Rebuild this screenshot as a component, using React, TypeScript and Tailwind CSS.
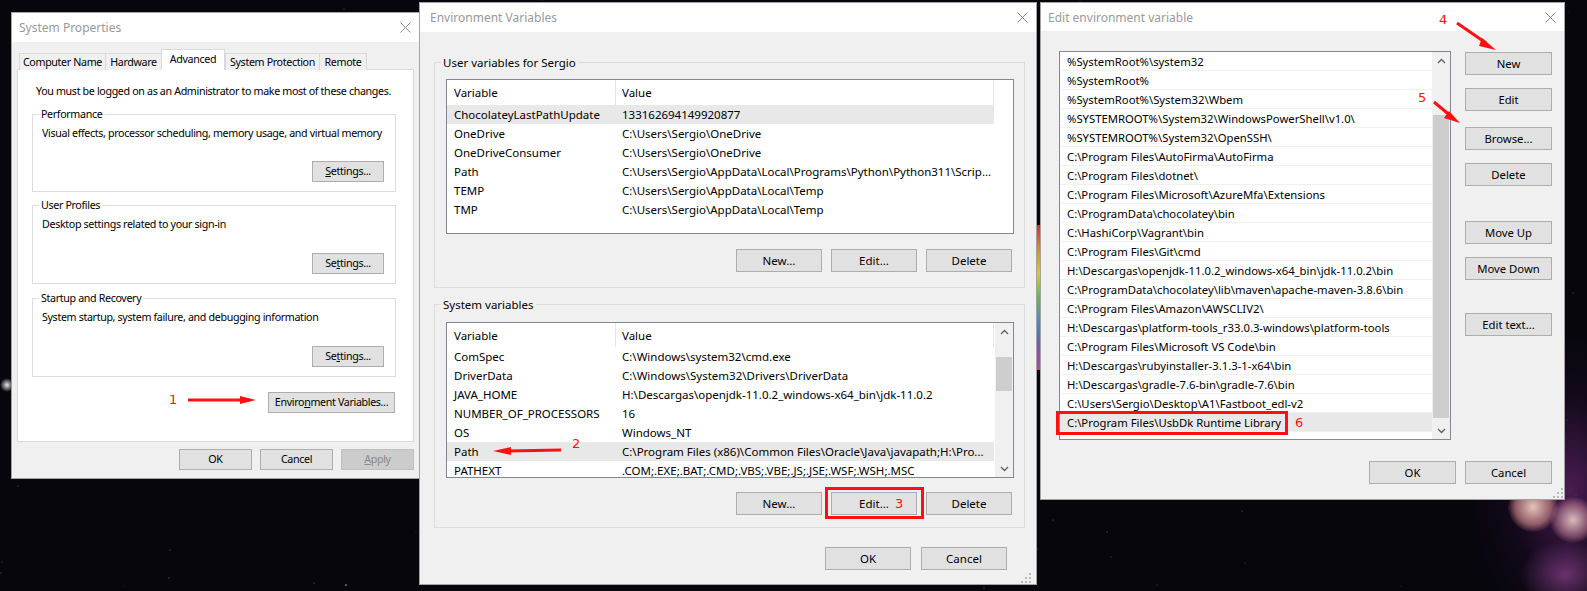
import React from 'react';

type Kids = { children?: React.ReactNode };

// deterministic star field for the desktop wallpaper
const STARS = (() => {
    let s = 91;
    const rnd = () => {
        s = (s * 16807) % 2147483647;
        return s / 2147483647;
    };
    return Array.from({ length: 220 }, () => ({
        x: Math.round(rnd() * 1587),
        y: Math.round(rnd() * 591),
        o: 0.12 + rnd() * 0.4,
        r: rnd() > 0.9 ? 1 : 0.6,
    }));
})();

function CloseX() {
    return (
        <svg width="11" height="11" viewBox="0 0 11 11" className="shrink-0">
            <path d="M0.5 0.5L10.5 10.5M10.5 0.5L0.5 10.5" stroke="#8a8a8a" strokeWidth="1" />
        </svg>
    );
}

function TitleBar({ title, h, pl, pr }: { title: string; h: string; pl: string; pr: string }) {
    return (
        <div className={`flex shrink-0 items-center justify-between bg-white ${h} ${pl} ${pr}`}>
            <span className="text-[12px] tracking-normal text-[#999999]">{title}</span>
            <CloseX />
        </div>
    );
}

function Btn({ w, h = 'h-[23px]', disabled, children }: Kids & { w: string; h?: string; disabled?: boolean }) {
    return (
        <div
            className={`flex shrink-0 items-center justify-center whitespace-nowrap border ${w} ${h} ${
                disabled ? 'border-[#bfbfbf] bg-[#cccccc] text-[#8a8a8a]' : 'border-[#adadad] bg-[#e1e1e1]'
            }`}
        >
            <span>{children}</span>
        </div>
    );
}

function Group({ label, bg, className, children }: Kids & { label: string; bg: string; className: string }) {
    return (
        <div className={`flex flex-col border border-[#dcdcdc] ${className}`}>
            <div className={`-mt-[8px] ml-[6px] w-fit px-[2px] leading-[15px] ${bg}`}>{label}</div>
            {children}
        </div>
    );
}

function Chevron({ up }: { up?: boolean }) {
    return (
        <svg width="9" height="6" viewBox="0 0 9 6">
            <path d={up ? 'M1 5L4.5 1.5L8 5' : 'M1 1L4.5 4.5L8 1'} fill="none" stroke="#606060" strokeWidth="1.3" />
        </svg>
    );
}

function Grip() {
    const dots = [
        [8, 0],
        [4, 4],
        [8, 4],
        [0, 8],
        [4, 8],
        [8, 8],
    ];
    return (
        <svg width="10" height="10" viewBox="0 0 10 10">
            {dots.map(([x, y]) => (
                <rect key={`${x}-${y}`} x={x} y={y} width="2" height="2" fill="#b8b8b8" />
            ))}
        </svg>
    );
}

/* ---------------- System Properties ---------------- */

const TABS = [
    { name: 'Computer Name', w: 'w-[87px]' },
    { name: 'Hardware', w: 'w-[57px]' },
    { name: 'Advanced', w: 'w-[64px]', active: true },
    { name: 'System Protection', w: 'w-[95px]' },
    { name: 'Remote', w: 'w-[48px]' },
];

function SystemProperties() {
    return (
        <div className="absolute left-[11px] top-[12px] flex h-[467px] w-[409px] flex-col whitespace-nowrap border border-[#a3a3a3] bg-[#f0f0f0] text-[10.7px] tracking-[-0.35px]">
            <TitleBar title="System Properties" h="h-[29px]" pl="pl-[7px]" pr="pr-[8px]" />
            <div className="relative z-10 ml-[7px] mt-[7px] flex h-[21px] items-end">
                {TABS.map((t) =>
                    t.active ? (
                        <div
                            key={t.name}
                            className={`flex h-[21px] items-start justify-center border border-b-0 border-[#d9d9d9] bg-white pt-[2px] ${t.w}`}
                        >
                            {t.name}
                        </div>
                    ) : (
                        <div
                            key={t.name}
                            className={`-mr-[1px] flex h-[17px] items-center justify-center border border-b-0 border-[#d9d9d9] bg-[#f0f0f0] ${t.w}`}
                        >
                            {t.name}
                        </div>
                    ),
                )}
            </div>
            <div className="-mt-[1px] ml-[5px] flex h-[373px] w-[397px] flex-col border border-[#d9d9d9] bg-white">
                <p className="ml-[18px] mt-[14px] leading-[15px]">
                    You must be logged on as an Administrator to make most of these changes.
                </p>
                <Group label="Performance" bg="bg-white" className="ml-[14px] mt-[15px] h-[78px] w-[364px]">
                    <p className="ml-[9px] mt-[4px] leading-[15px]">
                        Visual effects, processor scheduling, memory usage, and virtual memory
                    </p>
                    <div className="mb-[9px] mr-[11px] mt-auto self-end">
                        <Btn w="w-[72px]" h="h-[21px]">
                            <u>S</u>ettings...
                        </Btn>
                    </div>
                </Group>
                <Group label="User Profiles" bg="bg-white" className="ml-[14px] mt-[13px] h-[79px] w-[364px]">
                    <p className="ml-[9px] mt-[4px] leading-[15px]">Desktop settings related to your sign-in</p>
                    <div className="mb-[9px] mr-[11px] mt-auto self-end">
                        <Btn w="w-[72px]" h="h-[21px]">
                            Se<u>t</u>tings...
                        </Btn>
                    </div>
                </Group>
                <Group label="Startup and Recovery" bg="bg-white" className="ml-[14px] mt-[14px] h-[79px] w-[364px]">
                    <p className="ml-[9px] mt-[4px] leading-[15px]">
                        System startup, system failure, and debugging information
                    </p>
                    <div className="mb-[9px] mr-[11px] mt-auto self-end">
                        <Btn w="w-[72px]" h="h-[21px]">
                            Se<u>t</u>tings...
                        </Btn>
                    </div>
                </Group>
                <div className="mr-[18px] mt-[15px] self-end">
                    <Btn w="w-[127px]" h="h-[21px]">
                        Enviro<u>n</u>ment Variables...
                    </Btn>
                </div>
            </div>
            <div className="mr-[5px] mt-[7px] flex justify-end gap-[8px]">
                <Btn w="w-[73px]" h="h-[21px]">OK</Btn>
                <Btn w="w-[73px]" h="h-[21px]">Cancel</Btn>
                <Btn w="w-[73px]" h="h-[21px]" disabled>
                    <u>A</u>pply
                </Btn>
            </div>
        </div>
    );
}

/* ---------------- Environment Variables ---------------- */

const USER_VARS = [
    ['ChocolateyLastPathUpdate', '133162694149920877'],
    ['OneDrive', 'C:\\Users\\Sergio\\OneDrive'],
    ['OneDriveConsumer', 'C:\\Users\\Sergio\\OneDrive'],
    ['Path', 'C:\\Users\\Sergio\\AppData\\Local\\Programs\\Python\\Python311\\Scrip...'],
    ['TEMP', 'C:\\Users\\Sergio\\AppData\\Local\\Temp'],
    ['TMP', 'C:\\Users\\Sergio\\AppData\\Local\\Temp'],
];

const SYSTEM_VARS = [
    ['ComSpec', 'C:\\Windows\\system32\\cmd.exe'],
    ['DriverData', 'C:\\Windows\\System32\\Drivers\\DriverData'],
    ['JAVA_HOME', 'H:\\Descargas\\openjdk-11.0.2_windows-x64_bin\\jdk-11.0.2'],
    ['NUMBER_OF_PROCESSORS', '16'],
    ['OS', 'Windows_NT'],
    ['Path', 'C:\\Program Files (x86)\\Common Files\\Oracle\\Java\\javapath;H:\\Pro...'],
    ['PATHEXT', '.COM;.EXE;.BAT;.CMD;.VBS;.VBE;.JS;.JSE;.WSF;.WSH;.MSC'],
];

function VarTable({ rows, selected, headerH }: { rows: string[][]; selected: number; headerH: string }) {
    return (
        <div className="flex w-[547px] flex-col overflow-hidden">
            <div className={`flex shrink-0 items-center bg-white ${headerH}`}>
                <div className="flex h-full w-[169px] items-center border-r border-[#e5e5e5] pl-[7px]">Variable</div>
                <div className="flex h-full flex-1 items-center border-r border-[#e5e5e5] pl-[6px]">Value</div>
            </div>
            {rows.map(([k, v], i) => (
                <div
                    key={k + i}
                    className={`flex h-[19px] shrink-0 items-center whitespace-nowrap ${i === selected ? 'bg-[#e8e8e8]' : ''}`}
                >
                    <div className="w-[169px] pl-[7px]">{k}</div>
                    <div className="pl-[6px]">{v}</div>
                </div>
            ))}
        </div>
    );
}

function EnvButtons() {
    return (
        <div className="mr-[12px] flex justify-end gap-[9px]">
            <Btn w="w-[86px]">New...</Btn>
            <Btn w="w-[86px]">Edit...</Btn>
            <Btn w="w-[86px]">Delete</Btn>
        </div>
    );
}

function EnvironmentVariables() {
    return (
        <div className="absolute left-[419px] top-[2px] flex h-[583px] w-[618px] flex-col border border-[#a3a3a3] bg-[#f0f0f0]">
            <TitleBar title="Environment Variables" h="h-[29px]" pl="pl-[10px]" pr="pr-[8px]" />
            <Group label="User variables for Sergio" bg="bg-[#f0f0f0]" className="ml-[14px] mt-[30px] h-[226px] w-[591px]">
                <div className="ml-[11px] mt-[9px] flex h-[155px] w-[568px] border border-[#828790] bg-white">
                    <VarTable rows={USER_VARS} selected={0} headerH="h-[25px]" />
                </div>
                <div className="mt-[15px]">
                    <EnvButtons />
                </div>
            </Group>
            <Group label="System variables" bg="bg-[#f0f0f0]" className="ml-[14px] mt-[16px] h-[224px] w-[591px]">
                <div className="ml-[11px] mt-[10px] flex h-[156px] w-[568px] border border-[#828790] bg-white">
                    <VarTable rows={SYSTEM_VARS} selected={5} headerH="h-[24px]" />
                    <div className="ml-auto flex w-[18px] flex-col bg-[#f0f0f0]">
                        <div className="flex h-[17px] items-center justify-center">
                            <Chevron up />
                        </div>
                        <div className="mx-[1px] mt-[17px] h-[34px] bg-[#cdcdcd]" />
                        <div className="mt-auto flex h-[17px] items-center justify-center">
                            <Chevron />
                        </div>
                    </div>
                </div>
                <div className="mt-[14px]">
                    <EnvButtons />
                </div>
            </Group>
            <div className="mr-[29px] mt-[19px] flex justify-end gap-[10px]">
                <Btn w="w-[86px]">OK</Btn>
                <Btn w="w-[86px]">Cancel</Btn>
            </div>
            <div className="absolute bottom-[1px] right-[5px]">
                <Grip />
            </div>
        </div>
    );
}

/* ---------------- Edit environment variable ---------------- */

const PATHS = [
    '%SystemRoot%\\system32',
    '%SystemRoot%',
    '%SystemRoot%\\System32\\Wbem',
    '%SYSTEMROOT%\\System32\\WindowsPowerShell\\v1.0\\',
    '%SYSTEMROOT%\\System32\\OpenSSH\\',
    'C:\\Program Files\\AutoFirma\\AutoFirma',
    'C:\\Program Files\\dotnet\\',
    'C:\\Program Files\\Microsoft\\AzureMfa\\Extensions',
    'C:\\ProgramData\\chocolatey\\bin',
    'C:\\HashiCorp\\Vagrant\\bin',
    'C:\\Program Files\\Git\\cmd',
    'H:\\Descargas\\openjdk-11.0.2_windows-x64_bin\\jdk-11.0.2\\bin',
    'C:\\ProgramData\\chocolatey\\lib\\maven\\apache-maven-3.8.6\\bin',
    'C:\\Program Files\\Amazon\\AWSCLIV2\\',
    'H:\\Descargas\\platform-tools_r33.0.3-windows\\platform-tools',
    'C:\\Program Files\\Microsoft VS Code\\bin',
    'H:\\Descargas\\rubyinstaller-3.1.3-1-x64\\bin',
    'H:\\Descargas\\gradle-7.6-bin\\gradle-7.6\\bin',
    'C:\\Users\\Sergio\\Desktop\\A1\\Fastboot_edl-v2',
    'C:\\Program Files\\UsbDk Runtime Library',
];

function EditVariable() {
    return (
        <div className="absolute left-[1040px] top-[2px] flex h-[498px] w-[525px] flex-col border border-[#a3a3a3] bg-[#f0f0f0] text-[11.3px]">
            <TitleBar title="Edit environment variable" h="h-[28px]" pl="pl-[7px]" pr="pr-[8px]" />
            <div className="flex">
                <div className="ml-[18px] mt-[20px] flex h-[389px] w-[392px] border border-[#828790] bg-white">
                    <div className="flex w-[372px] flex-col">
                        {PATHS.map((p, i) => (
                            <div
                                key={p}
                                className={`flex h-[19px] shrink-0 items-center whitespace-nowrap border-b border-[#f0f0f0] pl-[7px] ${
                                    i === PATHS.length - 1 ? 'bg-[#e8e8e8]' : ''
                                }`}
                            >
                                {p}
                            </div>
                        ))}
                    </div>
                    <div className="flex w-[18px] flex-col bg-[#f0f0f0]">
                        <div className="flex h-[17px] items-center justify-center">
                            <Chevron up />
                        </div>
                        <div className="mx-[1px] mt-[46px] h-[303px] bg-[#cdcdcd]" />
                        <div className="mt-auto flex h-[17px] items-center justify-center">
                            <Chevron />
                        </div>
                    </div>
                </div>
                <div className="ml-[14px] flex flex-col">
                    <div className="mt-[21px]">
                        <Btn w="w-[87px]">New</Btn>
                    </div>
                    <div className="mt-[13px]">
                        <Btn w="w-[87px]">Edit</Btn>
                    </div>
                    <div className="mt-[16px]">
                        <Btn w="w-[87px]">Browse...</Btn>
                    </div>
                    <div className="mt-[13px]">
                        <Btn w="w-[87px]">Delete</Btn>
                    </div>
                    <div className="mt-[35px]">
                        <Btn w="w-[87px]">Move Up</Btn>
                    </div>
                    <div className="mt-[13px]">
                        <Btn w="w-[87px]">Move Down</Btn>
                    </div>
                    <div className="mt-[33px]">
                        <Btn w="w-[87px]">Edit text...</Btn>
                    </div>
                </div>
            </div>
            <div className="mr-[12px] mt-[21px] flex justify-end gap-[9px]">
                <Btn w="w-[87px]">OK</Btn>
                <Btn w="w-[87px]">Cancel</Btn>
            </div>
            <div className="absolute bottom-[1px] right-[1px]">
                <Grip />
            </div>
        </div>
    );
}

/* ---------------- red annotations drawn on top ---------------- */

function Annotations() {
    const red = '#ff1010';
    const num = { fill: red, fontSize: 13, fontFamily: 'DejaVu Sans, sans-serif' };
    return (
        <svg className="pointer-events-none absolute inset-0" width="1587" height="591" viewBox="0 0 1587 591">
            <text x="169" y="404" {...num}>1</text>
            <line x1="188" y1="400" x2="244" y2="400" stroke={red} strokeWidth="3" />
            <polygon points="240,396 256,400 240,404" fill={red} />

            <text x="572" y="448" {...num}>2</text>
            <line x1="561" y1="450" x2="508" y2="451" stroke={red} strokeWidth="3" />
            <polygon points="511,447 493,451 511,455" fill={red} />

            <rect x="826.5" y="488.5" width="96" height="29" fill="none" stroke={red} strokeWidth="3" />
            <text x="895" y="508" {...num}>3</text>

            <text x="1439" y="24" {...num}>4</text>
            <line x1="1457" y1="23" x2="1486" y2="43" stroke={red} strokeWidth="3" />
            <polygon points="1482,38 1496,50 1479,46" fill={red} />

            <text x="1418" y="102" {...num}>5</text>
            <line x1="1434" y1="102" x2="1452" y2="117" stroke={red} strokeWidth="3" />
            <polygon points="1449,111 1460,123 1444,118" fill={red} />

            <rect x="1057.5" y="412.5" width="229" height="21" fill="none" stroke={red} strokeWidth="3" />
            <text x="1295" y="427" {...num}>6</text>
        </svg>
    );
}

export default function App() {
    return (
        <div className="relative h-[591px] w-[1587px] overflow-hidden bg-[#07060c] font-['Noto_Sans',sans-serif] text-[11.5px] leading-[15px] text-black">
            <svg className="absolute inset-0" width="1587" height="591">
                {STARS.map((s, i) => (
                    <circle key={i} cx={s.x} cy={s.y} r={s.r} fill="#ffffff" opacity={s.o} />
                ))}
            </svg>
            <div className="absolute left-[0px] top-[378px] h-[14px] w-[14px] rounded-full bg-[radial-gradient(circle,rgba(255,255,255,0.9),rgba(255,255,255,0)_70%)]" />
            <div className="absolute left-[1037px] top-[225px] h-[145px] w-[3px] bg-[linear-gradient(to_bottom,#d03030,#e08a20,#d8c830,#5cbf40,#3a8fd0,#7a50c8,#c040a0)]" />
            <div className="absolute left-[1470px] top-[330px] h-[320px] w-[200px] rounded-full bg-[radial-gradient(closest-side,rgba(140,50,150,0.5),rgba(60,20,80,0.2)_60%,transparent)]" />
            <div className="absolute left-[1508px] top-[482px] h-[50px] w-[50px] rounded-full bg-[radial-gradient(circle,rgba(250,215,200,0.9)_0%,rgba(215,140,140,0.6)_50%,rgba(120,60,120,0)_72%)]" />
            <div className="absolute left-[1550px] top-[497px] h-[46px] w-[46px] rounded-full bg-[radial-gradient(circle,rgba(245,215,210,0.85)_0%,rgba(200,130,150,0.5)_50%,rgba(120,60,120,0)_72%)]" />
            <div className="absolute left-[1520px] top-[540px] h-[70px] w-[90px] rounded-full bg-[radial-gradient(closest-side,rgba(170,80,170,0.55),transparent)]" />
            <SystemProperties />
            <EnvironmentVariables />
            <EditVariable />
            <Annotations />
        </div>
    );
}
